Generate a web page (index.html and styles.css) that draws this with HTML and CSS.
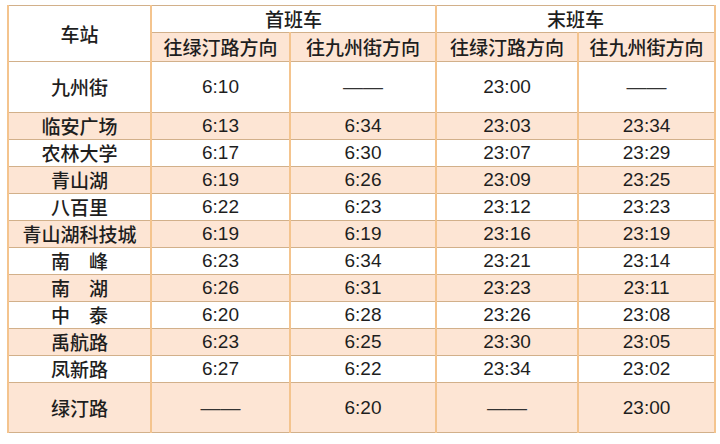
FILE: index.html
```html
<!DOCTYPE html>
<html lang="zh-CN">
<head>
<meta charset="utf-8">
<title>首末班车时刻表</title>
<link rel="stylesheet" href="styles.css">
</head>
<body>
<table class="timetable">
  <colgroup>
    <col class="c-station">
    <col class="c-a">
    <col class="c-b">
    <col class="c-c">
    <col class="c-d">
  </colgroup>
  <thead>
    <tr class="h1">
      <th rowspan="2" class="station-head">车站</th>
      <th colspan="2">首班车</th>
      <th colspan="2">末班车</th>
    </tr>
    <tr class="h2">
      <th>往绿汀路方向</th>
      <th>往九州街方向</th>
      <th>往绿汀路方向</th>
      <th>往九州街方向</th>
    </tr>
  </thead>
  <tbody>
    <tr class="tall white"><td class="st">九州街</td><td>6:10</td><td class="dash">——</td><td>23:00</td><td class="dash">——</td></tr>
    <tr class="peach"><td class="st">临安广场</td><td>6:13</td><td>6:34</td><td>23:03</td><td>23:34</td></tr>
    <tr class="white"><td class="st">农林大学</td><td>6:17</td><td>6:30</td><td>23:07</td><td>23:29</td></tr>
    <tr class="peach"><td class="st">青山湖</td><td>6:19</td><td>6:26</td><td>23:09</td><td>23:25</td></tr>
    <tr class="white"><td class="st">八百里</td><td>6:22</td><td>6:23</td><td>23:12</td><td>23:23</td></tr>
    <tr class="peach"><td class="st">青山湖科技城</td><td>6:19</td><td>6:19</td><td>23:16</td><td>23:19</td></tr>
    <tr class="white"><td class="st">南　峰</td><td>6:23</td><td>6:34</td><td>23:21</td><td>23:14</td></tr>
    <tr class="peach"><td class="st">南　湖</td><td>6:26</td><td>6:31</td><td>23:23</td><td>23:11</td></tr>
    <tr class="white"><td class="st">中　泰</td><td>6:20</td><td>6:28</td><td>23:26</td><td>23:08</td></tr>
    <tr class="peach"><td class="st">禹航路</td><td>6:23</td><td>6:25</td><td>23:30</td><td>23:05</td></tr>
    <tr class="white"><td class="st">凤新路</td><td>6:27</td><td>6:22</td><td>23:34</td><td>23:02</td></tr>
    <tr class="tall-last peach"><td class="st">绿汀路</td><td class="dash">——</td><td>6:20</td><td class="dash">——</td><td>23:00</td></tr>
  </tbody>
</table>
</body>
</html>
```

FILE: styles.css
```css
html, body {
  margin: 0;
  padding: 0;
  background: #ffffff;
}
body {
  padding: 5px 6px 0 7px;
}
.timetable {
  border-collapse: collapse;
  table-layout: fixed;
  width: 707px;
  border: 1px solid #c9ab84;
  font-family: "Liberation Sans", "Noto Sans CJK SC", sans-serif;
  font-size: 19px;
  color: #1e1e1e;
}
.c-station { width: 143px; }
.c-a { width: 139px; }
.c-b { width: 146px; }
.c-c { width: 142px; }
.c-d { width: 137px; }

.timetable th,
.timetable td {
  padding: 0;
  text-align: center;
  vertical-align: middle;
  line-height: 22px;
  border-left: 2px solid #f4c48e;
  border-right: 2px solid #f4c48e;
  border-top: 1px solid #d2b08a;
  border-bottom: 1px solid #d2b08a;
}
.timetable th {
  font-family: "Noto Sans CJK SC", sans-serif;
  font-weight: 500;
}
.st {
  font-family: "Noto Sans CJK SC", sans-serif;
  font-weight: 500;
}
.timetable td.dash {
  font-family: "Liberation Sans", sans-serif;
  font-size: 20px;
  letter-spacing: 0;
  color: #333;
}
.h1 { height: 27px; background: #ffffff; }
.h2 { height: 29px; background: #fde5d4; }
.station-head { background: #ffffff; }
tbody tr { height: 27px; }
tr.tall { height: 51px; }
tr.tall-last { height: 50px; }
.white { background: #ffffff; }
.peach { background: #fde5d4; }
```
